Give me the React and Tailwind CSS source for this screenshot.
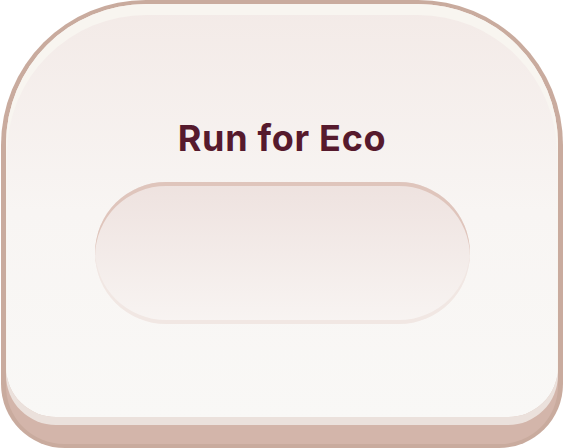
import React from "react";

export default function App() {
  return (
    <div className="w-[564px] h-[448px] bg-white pl-[1px] pr-[1px]">
      {/* outer rim */}
      <div className="h-full w-full rounded-t-[145px] rounded-b-[64px] bg-[#c9ab9e] px-[5px] pt-[4px] pb-[4px]">
        {/* bottom lip */}
        <div className="h-full w-full rounded-t-[140px] rounded-b-[58px] bg-[#d3b5aa] pb-[27px]">
          {/* face */}
          <div className="h-full w-full rounded-t-[140px] rounded-b-[50px] bg-gradient-to-b from-[#f3eae7] via-[#f8f5f3] to-[#f9f8f6] shadow-[inset_0_10px_0_1px_#f8f5f0,0_8px_0_#ebe1dc] flex flex-col items-center pt-[116px]">
            <h1
              className="text-[36px] leading-none font-bold tracking-[0.7px] text-[#561a2d]"
              style={{ fontFamily: "Inter, 'Noto Sans', sans-serif" }}
            >
              Run for Eco
            </h1>
            <div className="mt-[26px] w-[375px] h-[142px] rounded-full bg-gradient-to-b from-[#eee2df] to-[#f8f4f2] shadow-[inset_0_4px_0_#dfc5bc,inset_0_-4px_0_#f1e7e3]"></div>
          </div>
        </div>
      </div>
    </div>
  );
}
